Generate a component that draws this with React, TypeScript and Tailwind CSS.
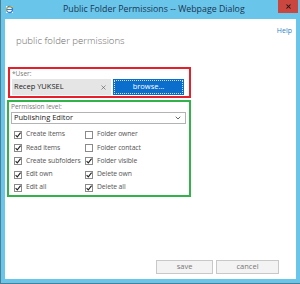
import { X, ChevronDown } from "lucide-react";

const font = { fontFamily: '"Open Sans", "Noto Sans", sans-serif' };

const Check = ({ checked, label }: { checked: boolean; label: string }) => (
  <div className="flex items-center h-[13.3px]">
    <svg width="8" height="8" viewBox="0 0 8 8" className="shrink-0">
      <rect x="0.5" y="0.5" width="7" height="7" fill="#fff" stroke="#8a8a8a" />
      {checked && <path d="M1.6 4.1 L3.3 5.8 L6.6 1.6" fill="none" stroke="#222" strokeWidth="1.1" />}
    </svg>
    <span className="ml-[4px] text-[6.8px] tracking-[-0.1px] text-[#555] leading-none whitespace-nowrap">{label}</span>
  </div>
);

export default function App() {
  const left = [
    ["Create items", true],
    ["Read items", true],
    ["Create subfolders", true],
    ["Edit own", true],
    ["Edit all", true],
  ] as const;
  const right = [
    ["Folder owner", false],
    ["Folder contact", false],
    ["Folder visible", true],
    ["Delete own", true],
    ["Delete all", true],
  ] as const;

  return (
    <div className="w-[300px] h-[284px] bg-[#69c6ea] flex flex-col border-l border-b border-[#4d7f94]" style={font}>
      {/* title bar */}
      <div className="h-[19px] flex items-start relative shrink-0">
        <div className="mt-[5px] ml-[4px] w-[9px] h-[9px] relative">
          <svg width="9" height="9" viewBox="0 0 9 9">
            <rect x="1" y="1" width="7" height="7" fill="#fff" />
            <circle cx="4.5" cy="4.5" r="3" fill="none" stroke="#2f7dd1" strokeWidth="1.3" />
            <path d="M1 6 Q0 2 8 1.5" fill="none" stroke="#e8b71c" strokeWidth="1" />
            <path d="M2 4.5 H7" stroke="#2f7dd1" strokeWidth="1" />
          </svg>
        </div>
        <div className="ml-[49px] mt-[3px] text-[8.8px] leading-[12px] text-[#1b3552] whitespace-nowrap">Public Folder Permissions -- Webpage Dialog</div>
        <div className="absolute right-[2px] top-0 w-[20px] h-[13px] bg-[#c9473e] flex items-center justify-center">
          <X size={7} strokeWidth={3.5} color="#1a1a1a" />
        </div>
      </div>
      {/* client */}
      <div className="flex-1 bg-white ml-[4px] mr-[4px] mb-[4px] flex flex-col">
        <div className="flex justify-between items-start">
          <div className="ml-[11px] mt-[16px] text-[9.6px] leading-[12px] font-light text-[#6b6b6b]">public folder permissions</div>
          <div className="mr-[4px] mt-[7px] text-[7px] leading-[10px] text-[#2f7fc7]">Help</div>
        </div>
        <div className="ml-[3px] mt-[20px] w-[183px] h-[31px] border-2 border-[#e5202b] px-[2px] pt-[1px]">
          <div className="text-[6.5px] leading-[8px] text-[#777]">*User:</div>
          <div className="flex mt-[1px]">
            <div className="w-[99px] h-[16px] bg-[#e5e5e5] flex items-center justify-between px-[2px]">
              <span className="text-[7.5px] text-[#222] leading-none">Recep YUKSEL</span>
              <X size={7} strokeWidth={2} color="#555" className="mr-[2px]" />
            </div>
            <div className="ml-[2px] w-[71px] h-[16px] bg-[#0b6dcc] p-[1px]">
              <div className="w-full h-full border border-dotted border-[#cfe3f7] flex items-center justify-center text-[7.5px] text-white leading-none">browse...</div>
            </div>
          </div>
        </div>
        <div className="ml-[2px] mt-[2px] w-[184px] h-[97px] border-2 border-[#31b24b] px-[2px] pt-[1px]">
          <div className="text-[6.5px] leading-[8px] text-[#777]">Permission level:</div>
          <div className="mt-[1px] w-[175px] h-[12px] border border-[#b3b3b3] flex items-center justify-between pl-[2px] pr-[3px]">
            <span className="text-[7.5px] text-[#222] leading-none">Publishing Editor</span>
            <ChevronDown size={8} strokeWidth={2.5} color="#444" />
          </div>
          <div className="flex mt-[4px] ml-[3px]">
            <div className="w-[71px] flex flex-col">
              {left.map(([l, c]) => <Check key={l} label={l} checked={c} />)}
            </div>
            <div className="flex flex-col">
              {right.map(([l, c]) => <Check key={l} label={l} checked={c} />)}
            </div>
          </div>
        </div>
        <div className="flex-1" />
        <div className="flex justify-end gap-[3px] mr-[17px] mb-[5px]">
          <div className="w-[57px] h-[14px] bg-[#f3f3f3] border border-[#c8c8c8] flex items-center justify-center text-[7.5px] text-[#777] leading-none">save</div>
          <div className="w-[63px] h-[14px] bg-[#f3f3f3] border border-[#c8c8c8] flex items-center justify-center text-[7.5px] text-[#777] leading-none">cancel</div>
        </div>
      </div>
    </div>
  );
}
